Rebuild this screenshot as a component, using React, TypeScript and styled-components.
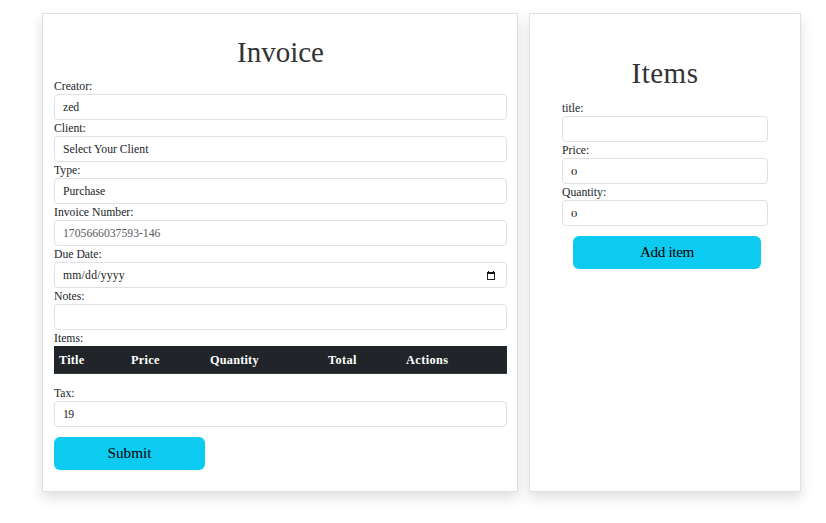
import React from 'react';
import styled, { createGlobalStyle } from 'styled-components';

const GlobalStyle = createGlobalStyle`
  *, *::before, *::after { box-sizing: border-box; }
  body {
    margin: 0;
    background: #fff;
    color: #212529;
    font-family: "Liberation Serif", serif;
    font-size: 11.7px;
    line-height: 16px;
    overflow: hidden;
  }
`;

const Page = styled.main`
  display: flex;
  gap: 11px;
  width: 826px;
  height: 523px;
  padding: 13px 25px 31px 42px;
`;

const Card = styled.section<{ $width: number; $padding: string }>`
  width: ${p => p.$width}px;
  height: 479px;
  flex: none;
  padding: ${p => p.$padding};
  background: #fff;
  border: 1px solid #dee2e6;
  box-shadow: 0 6px 12px rgba(0, 0, 0, 0.13);
`;

const Heading = styled.h1<{ $track?: number; $gap?: number }>`
  margin: 0 0 ${p => p.$gap ?? 9}px;
  color: #333;
  font-size: 29px;
  font-weight: 400;
  letter-spacing: ${p => p.$track ?? 0}px;
  line-height: 34px;
  text-align: center;
`;

const Label = styled.label<{ $track?: number }>`
  display: block;
  height: 16px;
  line-height: 18px;
  letter-spacing: ${p => p.$track ?? 0}px;
  white-space: nowrap;
`;

const Control = styled.div<{ $muted?: boolean; $track?: number }>`
  display: flex;
  align-items: center;
  justify-content: space-between;
  height: 26px;
  padding: 1px 11px 0 8px;
  border: 1px solid #dee2e6;
  border-radius: 4px;
  color: ${p => (p.$muted ? '#595c5f' : '#212529')};
  letter-spacing: ${p => p.$track ?? 0}px;
  white-space: nowrap;
`;

const SmallFigure = styled.span`
  display: inline-block;
  transform: scale(1.08, 0.72);
  transform-origin: 0 12px;
`;

const HeadRow = styled.div`
  display: grid;
  grid-template-columns: 72px 79px 118px 78px 1fr;
  height: 28px;
  margin-bottom: 11px;
  padding-left: 5px;
  background: #212529;
  border-bottom: 1px solid #373b3e;
  color: #fff;
  font-size: 12.3px;
  font-weight: 700;
  line-height: 29px;
`;

const HeadCell = styled.span<{ $track: number }>`
  letter-spacing: ${p => p.$track}px;
`;

const Button = styled.button<{ $width: number; $offset?: number; $track?: number }>`
  display: block;
  width: ${p => p.$width}px;
  height: 33px;
  margin: 10px 0 0 ${p => p.$offset ?? 0}px;
  padding: 0 0 2px;
  border: 0;
  border-radius: 6px;
  background: #0dcaf0;
  color: #000;
  font-family: inherit;
  font-size: 15.2px;
  letter-spacing: ${p => p.$track ?? 0}px;
  line-height: 31px;
`;

const CalendarIcon = () => (
  <svg width="8" height="9" viewBox="0 0 8 9" fill="none" shapeRendering="crispEdges">
    <path d="M.5 1.5h7v7h-7z" stroke="#222" />
    <path d="M0 1h8v2H0zM1 0h1v1H1zM6 0h1v1H6z" fill="#111" />
  </svg>
);

interface FieldProps {
  label: string;
  track?: number;
  valueTrack?: number;
  muted?: boolean;
  children?: React.ReactNode;
}

const Field = ({ label, track, valueTrack, muted, children }: FieldProps) => (
  <div>
    <Label $track={track}>{label}</Label>
    <Control $muted={muted} $track={valueTrack}>{children}</Control>
  </div>
);

export default function App() {
  return (
    <>
      <GlobalStyle />
      <Page>
        <Card $width={476} $padding="21px 10px 0 11px">
          <Heading>Invoice</Heading>
          <Field label="Creator:">zed</Field>
          <Field label="Client:">Select Your Client</Field>
          <Field label="Type:">Purchase</Field>
          <Field label="Invoice Number:" muted>1705666037593-146</Field>
          <Field label="Due Date:" valueTrack={0.22}><span>mm/dd/yyyy</span><CalendarIcon /></Field>
          <Field label="Notes:" />
          <Label>Items:</Label>
          <HeadRow>
            <HeadCell $track={0.2}>Title</HeadCell>
            <HeadCell $track={0.3}>Price</HeadCell>
            <HeadCell $track={0.2}>Quantity</HeadCell>
            <HeadCell $track={0.4}>Total</HeadCell>
            <HeadCell $track={0.4}>Actions</HeadCell>
          </HeadRow>
          <Field label="Tax:" valueTrack={-0.5}>19</Field>
          <Button $width={151}>Submit</Button>
        </Card>
        <Card $width={272} $padding="42px 32px 0">
          <Heading $track={0.5} $gap={10}>Items</Heading>
          <Field label="title:" />
          <Field label="Price:"><SmallFigure>0</SmallFigure></Field>
          <Field label="Quantity:"><SmallFigure>0</SmallFigure></Field>
          <Button $width={188} $offset={11} $track={-0.35}>Add item</Button>
        </Card>
      </Page>
    </>
  );
}
